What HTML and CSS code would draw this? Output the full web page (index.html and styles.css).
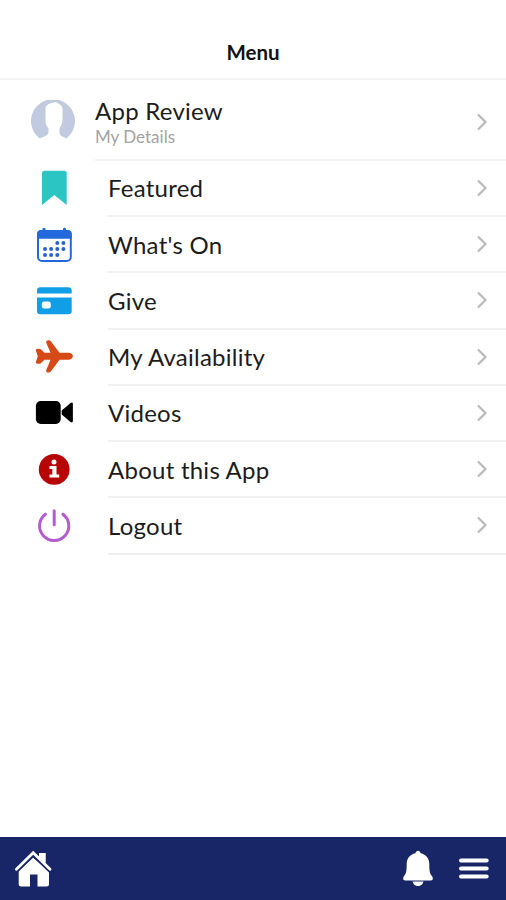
FILE: index.html
```html
<!DOCTYPE html>
<html lang="en">
<head>
    <meta charset="UTF-8">
    <meta name="viewport" content="width=device-width, initial-scale=1.0">
    <title>Menu</title>
    <link rel="stylesheet" href="styles.css">
</head>
<body>
    <header class="header">
        <h1>Menu</h1>
    </header>

    <main class="menu">
        <!-- Profile -->
        <a class="profile">
            <svg class="avatar" viewBox="0 0 44 44">
                <path fill="#c2cadf" d="M8.500 38.500A22 22 0 1 1 35.500 38.500C31 36.500 28.500 35 28.500 32.500V28C31 25 31.500 22 31.500 17V8C30 4 27 3.500 24.500 2C22 3 16 3 14.500 7.500V18C14.500 23 15 26 17.500 28V32.500C17 35.500 13 36.500 8.500 38.500Z"/>
            </svg>
            <div class="profile-content">
                <div class="profile-text">
                    <div class="profile-name">App Review</div>
                    <div class="profile-details">My Details</div>
                </div>
                <svg class="chevron" viewBox="0 0 12 18"><path d="M2 1.500L9.500 9L2 16.500"/></svg>
            </div>
        </a>

        <!-- Menu items -->
        <a class="item">
            <svg class="icon" viewBox="0 0 44 44">
                <path fill="#2bc5c4" d="M10 39V7.200Q10 4.700 12.500 4.700H32.200Q34.700 4.700 34.700 7.200V39L22.300 29Z"/>
            </svg>
            <div class="item-content">
                <span>Featured</span>
                <svg class="chevron" viewBox="0 0 12 18"><path d="M2 1.500L9.500 9L2 16.500"/></svg>
            </div>
        </a>
        <a class="item">
            <svg class="icon" viewBox="0 0 44 44">
                <rect x="6" y="8" width="32.800" height="30" rx="4" fill="#fff" stroke="#2469dc" stroke-width="2"/>
                <path fill="#2469dc" d="M5 15.800V11Q5 7 9 7H10.500V5.500Q12 4 13.500 5.500V7H31V5.500Q32.500 4 34 5.500V7H35.800Q39.800 7 39.800 11V15.800Z"/>
                <g fill="#2763cf">
                    <circle cx="25.300" cy="19.900" r="2"/><circle cx="31.400" cy="19.900" r="2"/>
                    <circle cx="13" cy="25.900" r="2"/><circle cx="19.100" cy="25.900" r="2"/><circle cx="25.300" cy="25.900" r="2"/><circle cx="31.400" cy="25.900" r="2"/>
                    <circle cx="13" cy="31.900" r="2"/><circle cx="19.100" cy="31.900" r="2"/><circle cx="25.300" cy="31.900" r="2"/>
                </g>
            </svg>
            <div class="item-content">
                <span>What's On</span>
                <svg class="chevron" viewBox="0 0 12 18"><path d="M2 1.500L9.500 9L2 16.500"/></svg>
            </div>
        </a>
        <a class="item">
            <svg class="icon" viewBox="0 0 44 44">
                <path fill="#109fe6" d="M5 14.400V11.500Q5 8.200 8.300 8.200H36.400Q39.700 8.200 39.700 11.500V14.400ZM5 18.600H39.700V32Q39.700 35.300 36.400 35.300H8.300Q5 35.300 5 32Z"/>
                <rect x="9.800" y="22.600" width="9" height="6.800" rx="2.500" fill="#fff"/>
            </svg>
            <div class="item-content">
                <span>Give</span>
                <svg class="chevron" viewBox="0 0 12 18"><path d="M2 1.500L9.500 9L2 16.500"/></svg>
            </div>
        </a>
        <a class="item">
            <svg class="icon" viewBox="0 0 44 44">
                <path fill="#d64a17" d="M14.200 7.500C13.400 5.200 17.400 4.200 19 6.500L27.500 17.800H37C42.200 18.500 42.200 24 37 24.700H27.500L19 36.200C17.400 38.500 13.400 37.500 14.200 35.200L18.500 24.700H12.500L8.500 28.500Q4 29.300 3.700 27.500L5.800 21.300L3.700 15Q4 13.300 8.500 14L12.500 17.800H18.500Z"/>
            </svg>
            <div class="item-content">
                <span>My Availability</span>
                <svg class="chevron" viewBox="0 0 12 18"><path d="M2 1.500L9.500 9L2 16.500"/></svg>
            </div>
        </a>
        <a class="item">
            <svg class="icon" viewBox="0 0 44 44">
                <rect x="3.900" y="10" width="24.800" height="23" rx="4.800"/>
                <path d="M29.700 19.500L38.500 12Q40.900 10.800 40.900 13V30Q40.900 32.200 38.500 31L29.700 23.500Z"/>
            </svg>
            <div class="item-content">
                <span>Videos</span>
                <svg class="chevron" viewBox="0 0 12 18"><path d="M2 1.500L9.500 9L2 16.500"/></svg>
            </div>
        </a>
        <a class="item">
            <svg class="icon" viewBox="0 0 44 44">
                <circle cx="22.200" cy="21.400" r="15.400" fill="#b70404"/>
                <circle cx="22" cy="14" r="2.500" fill="#fff"/>
                <path fill="#fff" d="M17.500 18H24.500V26.600H27.200V29.500H17.500V26.600H20.300V20.900H17.500Z"/>
            </svg>
            <div class="item-content">
                <span>About this App</span>
                <svg class="chevron" viewBox="0 0 12 18"><path d="M2 1.500L9.500 9L2 16.500"/></svg>
            </div>
        </a>
        <a class="item">
            <svg class="icon" viewBox="0 0 44 44">
                <path fill="none" stroke="#b45bcf" stroke-width="3" stroke-linecap="round" d="M22.200 6.800V20.800M13.400 10.200A14.600 14.600 0 1 0 31 10.200"/>
            </svg>
            <div class="item-content">
                <span>Logout</span>
                <svg class="chevron" viewBox="0 0 12 18"><path d="M2 1.500L9.500 9L2 16.500"/></svg>
            </div>
        </a>
    </main>

    <nav class="tabbar">
        <svg class="tab-home" viewBox="0 0 38 38">
            <path fill="#fff" d="M4.700 21L19 7.500L35 21V34Q35 36.500 32.500 36.500H23.500V24.500H16V36.500H7.200Q4.700 36.500 4.700 34Z"/>
            <path fill="#fff" d="M25 3H31.500V14L25 8Z"/>
            <path fill="none" stroke="#182667" stroke-width="5" d="M1 21.500L19.200 4L37.500 21.500"/>
            <path fill="none" stroke="#fff" stroke-width="2.800" stroke-linecap="round" d="M2.400 19.300L19.200 2.800L36 19.300"/>
            <path fill="#fff" d="M25 3H31.500V14L25 8Z"/>
        </svg>
        <div class="tab-right">
            <svg class="tab-bell" viewBox="0 0 32 38">
                <path fill="#fff" d="M16 .8Q18.200 .8 18.700 3.300C24 4.500 27.300 8.500 27.300 14.500C27.300 21.500 28 24 30.300 26.500Q32 30.500 28.500 30.500H3.500Q0 30.500 1.700 26.500C4 24 4.700 21.500 4.700 14.500C4.700 8.500 8 4.500 13.300 3.300Q13.800 .8 16 .8ZM10.500 31.600H21.500Q20.500 36 16 36Q11.500 36 10.500 31.600Z"/>
            </svg>
            <svg class="tab-menu" viewBox="0 0 32 22">
                <path fill="none" stroke="#fff" stroke-width="4" stroke-linecap="round" d="M3 2.600H28.700M3 10.600H28.700M3 18.600H28.700"/>
            </svg>
        </div>
    </nav>
</body>
</html>
```
FILE: styles.css
```css
* {
    box-sizing: border-box;
}
body {
    margin: 0;
    height: 100vh;
    display: flex;
    flex-direction: column;
    background-color: #fff;
    color: #1c1c1c;
    font-family: Lato, "Open Sans", sans-serif;
}
svg {
    display: block;
    flex-shrink: 0;
}
.header {
    height: 80px;
    padding-top: 26px;
    border-bottom: 2px solid #f4f4f4;
    text-align: center;
}
h1 {
    margin: 0;
    font-size: 20.5px;
    line-height: 53px;
    font-weight: 700;
    color: #111;
}
.menu {
    flex: 1;
}
.profile {
    display: flex;
    height: 80.75px;
    padding-left: 31px;
}
.avatar {
    width: 44px;
    height: 44px;
    margin-top: 20px;
}
.profile-content {
    flex: 1;
    display: flex;
    align-items: center;
    justify-content: space-between;
    margin-left: 20px;
    padding: 5px 18px 0 0;
    border-bottom: 2px solid #f1f1f1;
}
.profile-name {
    font-size: 24px;
    line-height: 28px;
    letter-spacing: 0.25px;
}
.profile-details {
    margin-top: 2px;
    font-size: 17px;
    line-height: 20px;
    color: #a3a3a3;
}
.item {
    display: flex;
    align-items: center;
    height: 56.25px;
    padding-left: 32px;
}
.icon {
    width: 44px;
    height: 44px;
    margin-bottom: 1px;
}
.item-content {
    flex: 1;
    display: flex;
    align-items: center;
    justify-content: space-between;
    height: 100%;
    margin-left: 32px;
    padding-right: 18px;
    border-bottom: 2px solid #f1f1f1;
    font-size: 24px;
    letter-spacing: 0.25px;
}
.chevron {
    width: 12px;
    height: 18px;
    fill: none;
    stroke: #b9b9b9;
    stroke-width: 2.2;
}
.tabbar {
    display: flex;
    align-items: center;
    justify-content: space-between;
    height: 63px;
    padding: 0 16px 0 14px;
    background-color: #182667;
}
.tab-home {
    width: 38px;
    height: 38px;
}
.tab-right {
    display: flex;
    align-items: center;
    gap: 24px;
}
.tab-bell {
    width: 32px;
    height: 38px;
}
.tab-menu {
    width: 32px;
    height: 22px;
}
```
